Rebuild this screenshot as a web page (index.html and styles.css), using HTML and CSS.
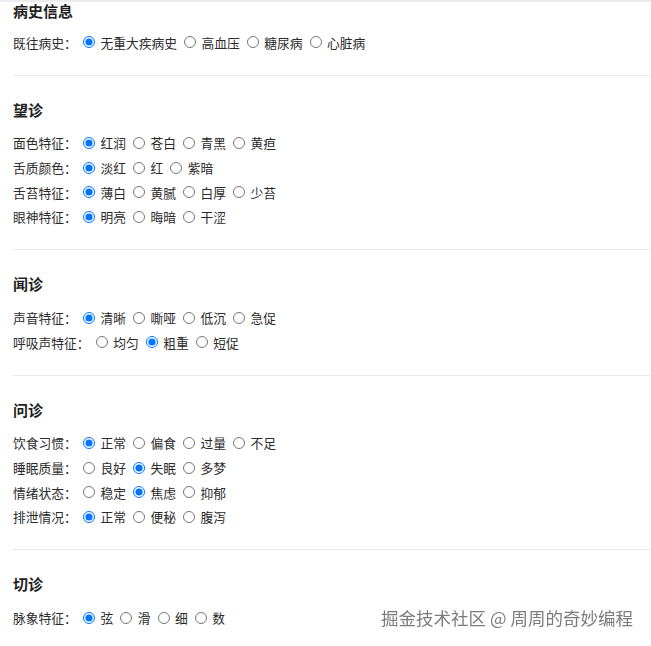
FILE: index.html
```html
<!DOCTYPE html>
<html lang="zh-CN">
<head>
    <meta charset="UTF-8">
    <meta name="viewport" content="width=device-width, initial-scale=1.0">
    <title>中医四诊信息</title>
    <link rel="stylesheet" href="styles.css">
</head>
<body>
    <div class="page">
        <div class="section first">
            <h3>病史信息</h3>
            <div class="row">
                <span class="row-label">既往病史：</span>
                <label class="opt"><input type="radio" name="history" checked>无重大疾病史</label>
                <label class="opt"><input type="radio" name="history">高血压</label>
                <label class="opt"><input type="radio" name="history">糖尿病</label>
                <label class="opt"><input type="radio" name="history">心脏病</label>
            </div>
        </div>

        <div class="section">
            <h3>望诊</h3>
            <div class="row">
                <span class="row-label">面色特征：</span>
                <label class="opt"><input type="radio" name="face" checked>红润</label>
                <label class="opt"><input type="radio" name="face">苍白</label>
                <label class="opt"><input type="radio" name="face">青黑</label>
                <label class="opt"><input type="radio" name="face">黄疸</label>
            </div>
            <div class="row">
                <span class="row-label">舌质颜色：</span>
                <label class="opt"><input type="radio" name="tongue" checked>淡红</label>
                <label class="opt"><input type="radio" name="tongue">红</label>
                <label class="opt"><input type="radio" name="tongue">紫暗</label>
            </div>
            <div class="row">
                <span class="row-label">舌苔特征：</span>
                <label class="opt"><input type="radio" name="coating" checked>薄白</label>
                <label class="opt"><input type="radio" name="coating">黄腻</label>
                <label class="opt"><input type="radio" name="coating">白厚</label>
                <label class="opt"><input type="radio" name="coating">少苔</label>
            </div>
            <div class="row">
                <span class="row-label">眼神特征：</span>
                <label class="opt"><input type="radio" name="eyes" checked>明亮</label>
                <label class="opt"><input type="radio" name="eyes">晦暗</label>
                <label class="opt"><input type="radio" name="eyes">干涩</label>
            </div>
        </div>

        <div class="section">
            <h3>闻诊</h3>
            <div class="row">
                <span class="row-label">声音特征：</span>
                <label class="opt"><input type="radio" name="voice" checked>清晰</label>
                <label class="opt"><input type="radio" name="voice">嘶哑</label>
                <label class="opt"><input type="radio" name="voice">低沉</label>
                <label class="opt"><input type="radio" name="voice">急促</label>
            </div>
            <div class="row">
                <span class="row-label">呼吸声特征：</span>
                <label class="opt"><input type="radio" name="breath">均匀</label>
                <label class="opt"><input type="radio" name="breath" checked>粗重</label>
                <label class="opt"><input type="radio" name="breath">短促</label>
            </div>
        </div>

        <div class="section">
            <h3>问诊</h3>
            <div class="row">
                <span class="row-label">饮食习惯：</span>
                <label class="opt"><input type="radio" name="diet" checked>正常</label>
                <label class="opt"><input type="radio" name="diet">偏食</label>
                <label class="opt"><input type="radio" name="diet">过量</label>
                <label class="opt"><input type="radio" name="diet">不足</label>
            </div>
            <div class="row">
                <span class="row-label">睡眠质量：</span>
                <label class="opt"><input type="radio" name="sleep">良好</label>
                <label class="opt"><input type="radio" name="sleep" checked>失眠</label>
                <label class="opt"><input type="radio" name="sleep">多梦</label>
            </div>
            <div class="row">
                <span class="row-label">情绪状态：</span>
                <label class="opt"><input type="radio" name="mood">稳定</label>
                <label class="opt"><input type="radio" name="mood" checked>焦虑</label>
                <label class="opt"><input type="radio" name="mood">抑郁</label>
            </div>
            <div class="row">
                <span class="row-label">排泄情况：</span>
                <label class="opt"><input type="radio" name="excretion" checked>正常</label>
                <label class="opt"><input type="radio" name="excretion">便秘</label>
                <label class="opt"><input type="radio" name="excretion">腹泻</label>
            </div>
        </div>

        <div class="section">
            <h3>切诊</h3>
            <div class="row">
                <span class="row-label">脉象特征：</span>
                <label class="opt"><input type="radio" name="pulse" checked>弦</label>
                <label class="opt"><input type="radio" name="pulse">滑</label>
                <label class="opt"><input type="radio" name="pulse">细</label>
                <label class="opt"><input type="radio" name="pulse">数</label>
            </div>
        </div>
    </div>

    <div class="watermark">掘金技术社区 @ 周周的奇妙编程</div>
</body>
</html>
```

FILE: styles.css
```css
body {
    margin: 0;
    font-family: "Noto Sans CJK SC", "Noto Sans", sans-serif;
    color: #2b2b2b;
    background: #fff;
    border-top: 2px solid #ececec;
}
.page {
    padding: 0 1px 0 13px;
}
.section {
    padding: 25px 0 20px;
    border-bottom: 1px solid #e8e8e8;
}
.section.first {
    padding-top: 0;
}
.section h3 {
    margin: 0 0 12px;
    font-size: 15px;
    line-height: 18px;
    font-weight: bold;
    color: #1f1f1f;
}
.section.first h3 {
    margin-bottom: 10px;
}
.row {
    display: flex;
    align-items: center;
    height: 24.67px;
    font-size: 12.75px;
}
.row-label {
    margin-right: 1.25px;
}
.opt {
    display: inline-flex;
    align-items: center;
    margin-right: 2px;
}
.opt input {
    width: 12px;
    height: 12px;
    margin: 0 5.5px 0 5px;
}
.watermark {
    position: fixed;
    right: 18px;
    bottom: 16px;
    font-size: 17.5px;
    line-height: 24px;
    color: #7c7c7c;
    text-shadow: 0 0 1px #fff, 1px 1px 1px #fff, -1px -1px 1px #fff;
}
```
